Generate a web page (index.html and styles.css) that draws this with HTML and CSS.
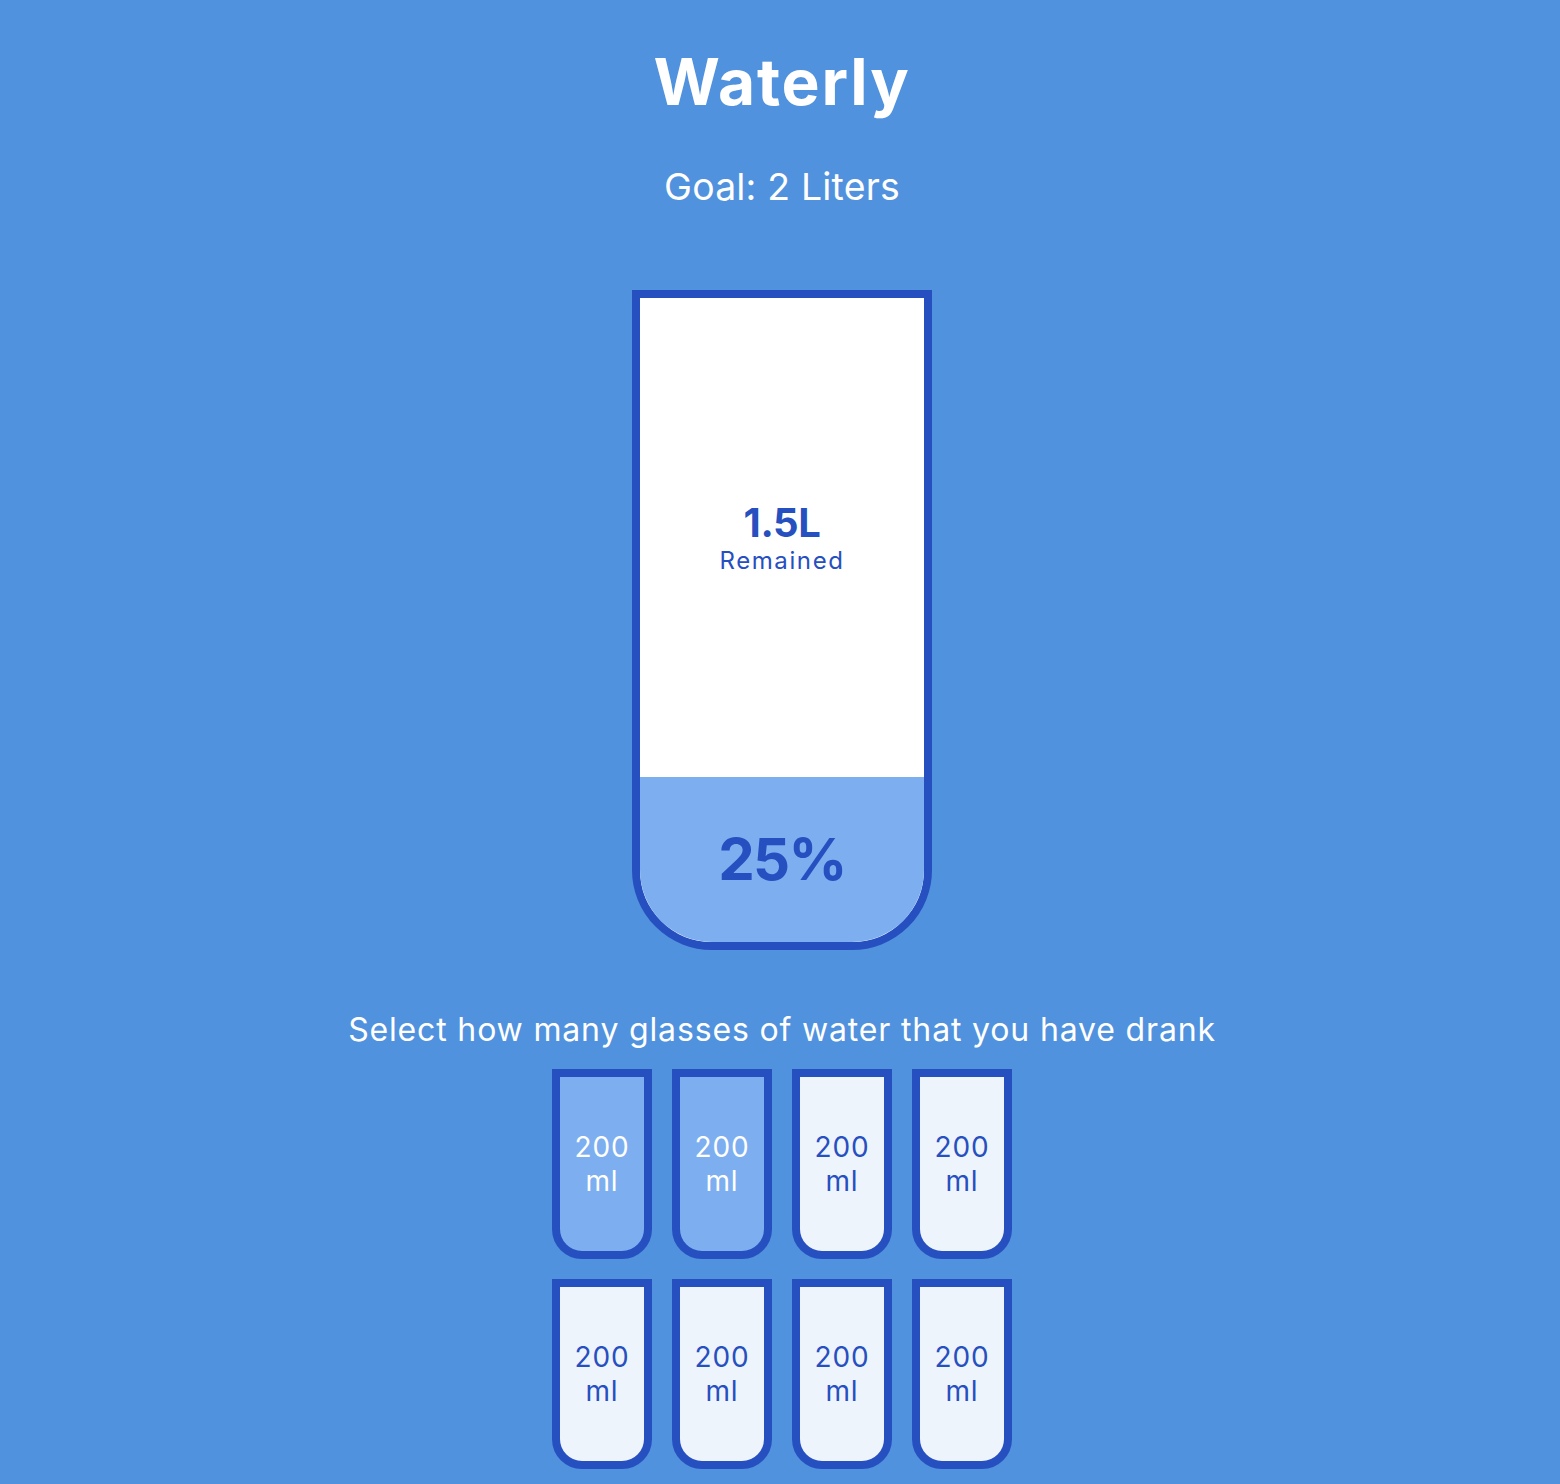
FILE: index.html
```
<!DOCTYPE html>
<html lang="en">
<head>
<meta charset="UTF-8">
<title>Waterly</title>
<link rel="stylesheet" href="styles.css">
</head>
<body>
<h1 class="title">Waterly</h1>
<h3 class="goal">Goal: 2 Liters</h3>

<div class="cup">
  <div class="remained">
    <span class="liters">1.5L</span>
    <small class="remained-label">Remained</small>
  </div>
  <div class="percentage">25%</div>
</div>

<p class="text">Select how many glasses of water that you have drank</p>

<div class="cups">
  <div class="cup cup-small full">200 ml</div>
  <div class="cup cup-small full">200 ml</div>
  <div class="cup cup-small">200 ml</div>
  <div class="cup cup-small">200 ml</div>
  <div class="cup cup-small">200 ml</div>
  <div class="cup cup-small">200 ml</div>
  <div class="cup cup-small">200 ml</div>
  <div class="cup cup-small">200 ml</div>
</div>
</body>
</html>
```
FILE: styles.css
```
* { box-sizing: content-box; }

body {
  background-color: #5092de;
  color: #ffffff;
  font-family: Inter, "DejaVu Sans", sans-serif;
  letter-spacing: 0.6px;
  display: flex;
  flex-direction: column;
  align-items: center;
  margin: 16px 16px 0 20px;
}

.title {
  font-size: 64px;
  font-weight: 700;
  letter-spacing: 1.8px;
  margin: 27px 0 0;
  line-height: 1.22;
}

.goal {
  font-size: 37.4px;
  font-weight: 400;
  letter-spacing: 0.2px;
  margin: 43px 0 20px;
  line-height: 1.22;
}

.cup {
  background: #ffffff;
  border: 8px solid #264fc0;
  color: #264fc0;
  border-radius: 0 0 80px 80px;
  height: 644px;
  width: 284px;
  margin: 60px 0;
  display: flex;
  flex-direction: column;
  align-items: center;
  justify-content: center;
  overflow: hidden;
}

.remained {
  display: flex;
  flex-direction: column;
  align-items: center;
  justify-content: center;
  text-align: center;
  flex: 1;
  width: 100%;
}

.liters {
  font-size: 40px;
  font-weight: 700;
  letter-spacing: -0.4px;
  line-height: 1.2;
}

.remained-label {
  font-size: 24px;
  letter-spacing: 1.6px;
  line-height: 1.2;
}

.percentage {
  background-color: #7caef0;
  display: flex;
  align-items: center;
  justify-content: center;
  font-weight: 700;
  font-size: 58px;
  letter-spacing: -1.7px;
  height: 165px;
  width: 100%;
  flex-shrink: 0;
}

.text {
  font-size: 32px;
  letter-spacing: 0.84px;
  text-align: center;
  margin: 0 0 10px;
  line-height: 1.22;
}

.cups {
  display: flex;
  flex-wrap: wrap;
  align-items: center;
  justify-content: center;
  width: 560px;
}

.cup.cup-small {
  height: 174px;
  width: 84px;
  border-radius: 0 0 30px 30px;
  background-color: rgba(255, 255, 255, 0.9);
  font-size: 28px;
  line-height: 1.22;
  letter-spacing: 0.8px;
  text-align: center;
  margin: 10px;
  cursor: pointer;
}

.cup.cup-small.full {
  background-color: #7caef0;
  color: #ffffff;
}
```
